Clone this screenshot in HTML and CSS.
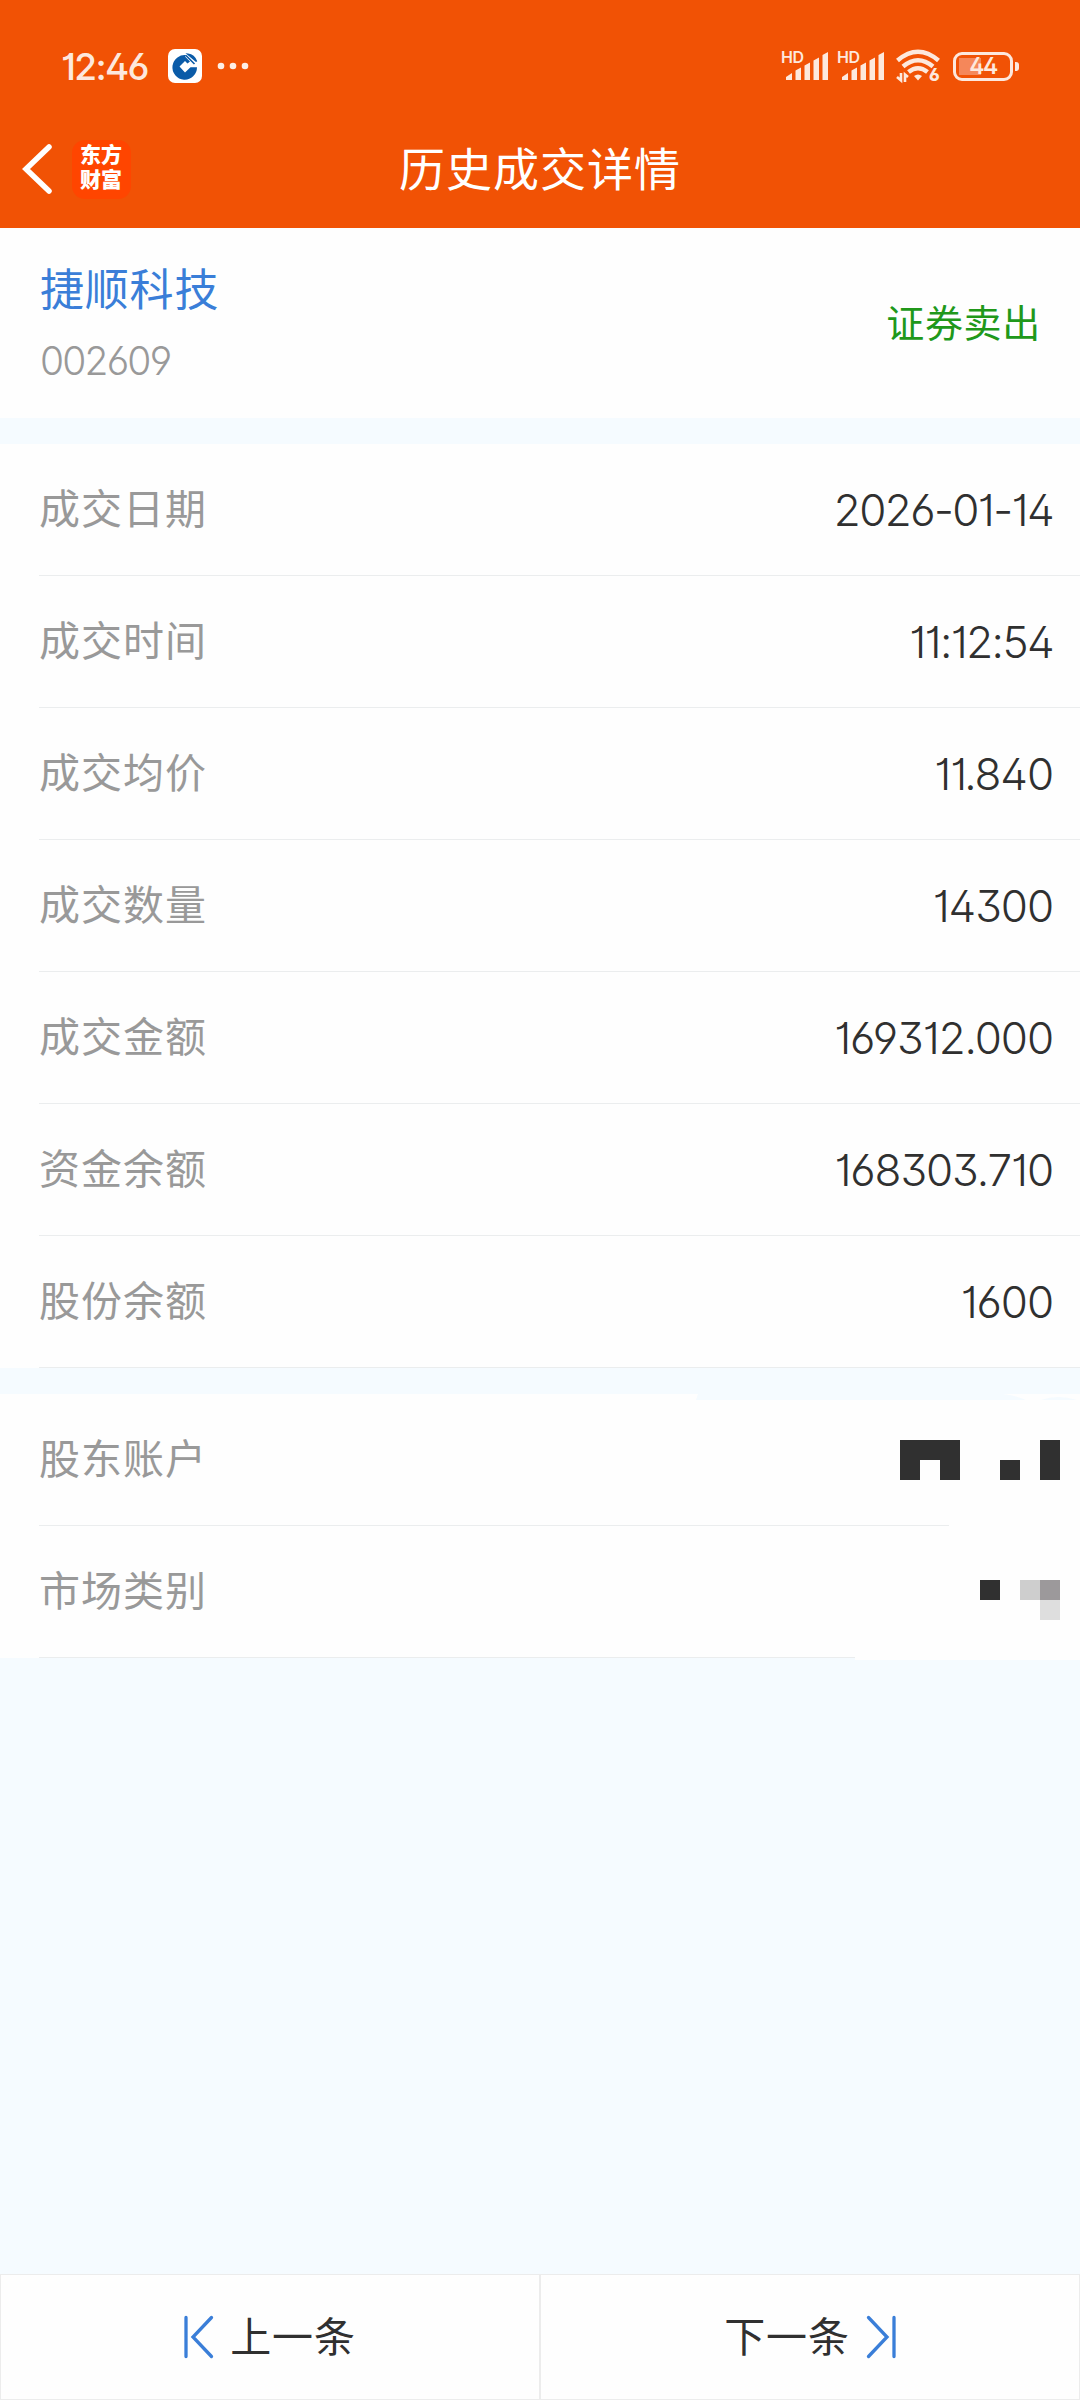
FILE: index.html
```html
<!DOCTYPE html>
<html lang="zh-CN">
<head>
    <meta charset="UTF-8">
    <meta name="viewport" content="width=device-width, initial-scale=1.0">
    <title>历史成交详情</title>
    <link rel="stylesheet" href="styles.css">
</head>
<body>
    <header>
        <div class="status">
            <span class="time">12:46</span>
            <svg class="bank" viewBox="0 0 34 34">
                <rect width="34" height="34" rx="7" fill="#fff"/>
                <path d="M19 6.300A12.300 12.300 0 1 0 29 18.300H22.500L17 23.500L11.500 17.500L17 12L19.500 14.500L22 12.500L17 7.500Z" fill="#0a5ba8"/>
                <path d="M18 6.500L26.500 15M20 5.300Q26 6 28.500 12.500Z" stroke="#0a5ba8" stroke-width="1.600" fill="#0a5ba8"/>
            </svg>
            <svg class="dots" viewBox="0 0 32 8" fill="#fdeee6">
                <circle cx="4" cy="4" r="3.300"/><circle cx="16" cy="4" r="3.300"/><circle cx="28" cy="4" r="3.300"/>
            </svg>
            <div class="status-right">
                <div class="signal">
                    <span>HD</span>
                    <svg viewBox="0 0 44 30" fill="#fde8dd"><path d="M4 29V26L10 22V29ZM13.500 29V19.500L19 16.500V29ZM22.500 29V14.500L28 11.500V29ZM31.500 29V9.500L37 6.500V29ZM40.500 29V4L46 1V29Z"/></svg>
                </div>
                <div class="signal">
                    <span>HD</span>
                    <svg viewBox="0 0 44 30" fill="#fde8dd"><path d="M4 29V26L10 22V29ZM13.500 29V19.500L19 16.500V29ZM22.500 29V14.500L28 11.500V29ZM31.500 29V9.500L37 6.500V29ZM40.500 29V4L46 1V29Z"/></svg>
                </div>
                <div class="wifi">
                    <svg viewBox="0 0 44 34" fill="none" stroke="#fde8dd" stroke-width="4.500">
                        <path d="M1.500 11.500Q22 -6 42.500 11.500M7 17.500Q22 5 37 17.500M12.500 23Q22 15.500 31.500 23"/>
                        <path d="M18 27Q22 24 26 27L22 31.500Z" fill="#fde8dd" stroke="none"/>
                        <path d="M1 28L5 31.500V24M9 33V25.500L12 28" stroke-width="2.600"/>
                    </svg>
                    <span>6</span>
                </div>
                <div class="battery"><span>44</span></div>
            </div>
        </div>
        <div class="nav">
            <svg class="back" viewBox="0 0 30 50"><path d="M27 3L4 25L27 47" fill="none" stroke="#fff" stroke-width="5.500" stroke-linecap="round"/></svg>
            <div class="logo">东方财富</div>
            <h1>历史成交详情</h1>
        </div>
    </header>

    <section class="stock">
        <div>
            <div class="stock-name">捷顺科技</div>
            <div class="stock-code">002609</div>
        </div>
        <div class="stock-type">证券卖出</div>
    </section>

    <section class="list">
        <div class="row"><label>成交日期</label><span class="date">2026-01-14</span></div>
        <div class="row"><label>成交时间</label><span class="date">11:12:54</span></div>
        <div class="row"><label>成交均价</label><span>11.840</span></div>
        <div class="row"><label>成交数量</label><span>14300</span></div>
        <div class="row"><label>成交金额</label><span>169312.000</span></div>
        <div class="row"><label>资金余额</label><span>168303.710</span></div>
        <div class="row"><label>股份余额</label><span>1600</span></div>
    </section>

    <section class="list">
        <div class="row"><label>股东账户</label></div>
        <div class="row"><label>市场类别</label></div>
        <!-- hidden account values -->
        <svg class="mosaic" viewBox="0 0 384 266">
            <path d="M253 128H384V266H159V258H253Z" fill="#fefefe"/>
            <path d="M2 0H307Q322 2 330 6H0ZM345 6Q362 0 381 6Z" fill="#f5fbff"/>
            <path d="M204 46H264V86H244V66H224V86H204ZM304 66H324V86H304ZM344 46H364V86H344ZM284 186H304V206H284Z" fill="#303030"/>
            <path d="M324 186H344V206H324Z" fill="#cecece"/>
            <path d="M344 186H364V206H344Z" fill="#9c999b"/>
            <path d="M344 206H364V226H344Z" fill="#dedede"/>
        </svg>
    </section>

    <footer>
        <button>
            <svg viewBox="0 0 30 44"><path d="M2 2.500V41.500M27.500 2.500L9 22L27.500 41.500"/></svg>
            <span>上一条</span>
        </button>
        <button>
            <span>下一条</span>
            <svg viewBox="0 0 30 44"><path d="M28 2.500V41.500M2.500 2.500L21 22L2.500 41.500"/></svg>
        </button>
    </footer>
</body>
</html>
```
FILE: styles.css
```css
* {
    margin: 0; padding: 0; border: 0;
    box-sizing: border-box;
}
html, body { height: 100%; }
body {
    display: flex;
    flex-direction: column;
    background: #f5fbff;
    color: #303030;
    font-family: Inter, "Noto Sans CJK SC", sans-serif;
    font-feature-settings: "ss01", "cv01", "cv09";
    overflow: hidden;
}
svg {
    display: block;
    flex: none;
    overflow: visible;
}

/* header */
header {
    height: 228px;
    padding-top: 36px;
    background: #f15205;
    color: #fff;
}
.status {
    display: flex;
    align-items: center;
    height: 60px;
    padding: 0 67px 0 61px;
    color: #fde8dd;
}
.time {
    width: 107px;
    font-size: 37px;
    font-weight: 530;
    letter-spacing: -1.7px;
}
.bank { width: 34px; height: 34px; }
.dots { width: 32px; height: 8px; margin-left: 15px; }
.status-right {
    display: flex;
    align-items: center;
    margin-left: auto;
}
.signal {
    position: relative;
    width: 56px;
    height: 30px;
}
.signal svg { width: 44px; height: 30px; }
.signal span {
    position: absolute;
    left: -1px; top: -2px;
    font-size: 16px;
    line-height: 16px;
    font-weight: 600;
    letter-spacing: -0.5px;
}
.wifi {
    position: relative;
    width: 57px;
    height: 34px;
    margin-left: 2px;
}
.wifi svg { width: 44px; height: 34px; }
.wifi span {
    position: absolute;
    left: 33px; top: 18px;
    font-size: 17px;
    line-height: 17px;
    font-weight: 800;
}
.battery {
    position: relative;
    width: 60px;
    height: 29px;
    border: 3px solid #fde8dd;
    border-radius: 9px;
    background: linear-gradient(#f5875a, #f5875a) 3px 3px / 22px 17px no-repeat;
    text-align: center;
    font-size: 23px;
    line-height: 23px;
    font-weight: 600;
    letter-spacing: -1.5px;
}
.battery::after {
    content: "";
    position: absolute;
    right: -9px; top: 7px;
    width: 4px;
    height: 9px;
    border-radius: 0 3px 3px 0;
    background: #fde8dd;
}
.nav {
    position: relative;
    display: flex;
    align-items: center;
    height: 132px;
    padding: 8px 0 8px 22px;
}
.nav .back { width: 30px; height: 50px; margin-top: 14px; }
.logo {
    width: 59px;
    height: 59px;
    margin: 14px 0 0 20px;
    padding: 1px 8px;
    border-radius: 13px;
    background: #ff4500;
    font: 900 21px/25px "Noto Sans CJK SC", sans-serif;
}
h1 {
    position: absolute;
    left: 160px; right: 160px; top: 40px;
    text-align: center;
    font-size: 46px;
    line-height: 66px;
    font-weight: 400;
    letter-spacing: 1px;
}

/* stock */
.stock {
    display: flex;
    justify-content: space-between;
    align-items: center;
    height: 190px;
    margin-bottom: 26px;
    padding: 0 39px 0 40px;
    background: #fefefe;
}
.stock-name {
    margin-top: -2px;
    color: #3a7ed8;
    font-size: 44px;
    line-height: 64px;
    letter-spacing: 0.8px;
}
.stock-code {
    margin-top: 14px;
    color: #999;
    font-size: 39px;
    line-height: 50px;
    font-weight: 360;
    letter-spacing: -1.8px;
}
.stock-type {
    padding-bottom: 5px;
    color: #20981a;
    font-size: 38px;
    letter-spacing: 0.7px;
}

/* rows */
.list {
    position: relative;
    margin-bottom: 26px;
    background: #fefefe;
}
.row {
    display: flex;
    justify-content: space-between;
    align-items: center;
    height: 132px;
    margin-left: 39px;
    padding-right: 27px;
    border-bottom: 1px solid #ebedee;
}
.row label {
    padding-bottom: 8px;
    color: #999;
    font-size: 41px;
    letter-spacing: 1px;
}
.row span {
    font-size: 44px;
    font-weight: 350;
    letter-spacing: -1.1px;
}
.row .date { letter-spacing: -1.6px; }
.mosaic {
    position: absolute;
    right: 0; top: 0;
    width: 384px;
    height: 266px;
}

/* footer */
footer {
    display: flex;
    height: 126px;
    margin-top: auto;
}
button {
    display: flex;
    flex: 1;
    justify-content: center;
    align-items: center;
    gap: 16px;
    border: 1px solid #ececec;
    background: #fefefe;
    color: #303030;
    font: 41px "Noto Sans CJK SC", sans-serif;
}
button span {
    padding-bottom: 7px;
    letter-spacing: 0.8px;
}
button svg {
    width: 30px;
    height: 44px;
    fill: none;
    stroke: #3a7ed8;
    stroke-width: 3.3;
    stroke-linecap: round;
}
```
